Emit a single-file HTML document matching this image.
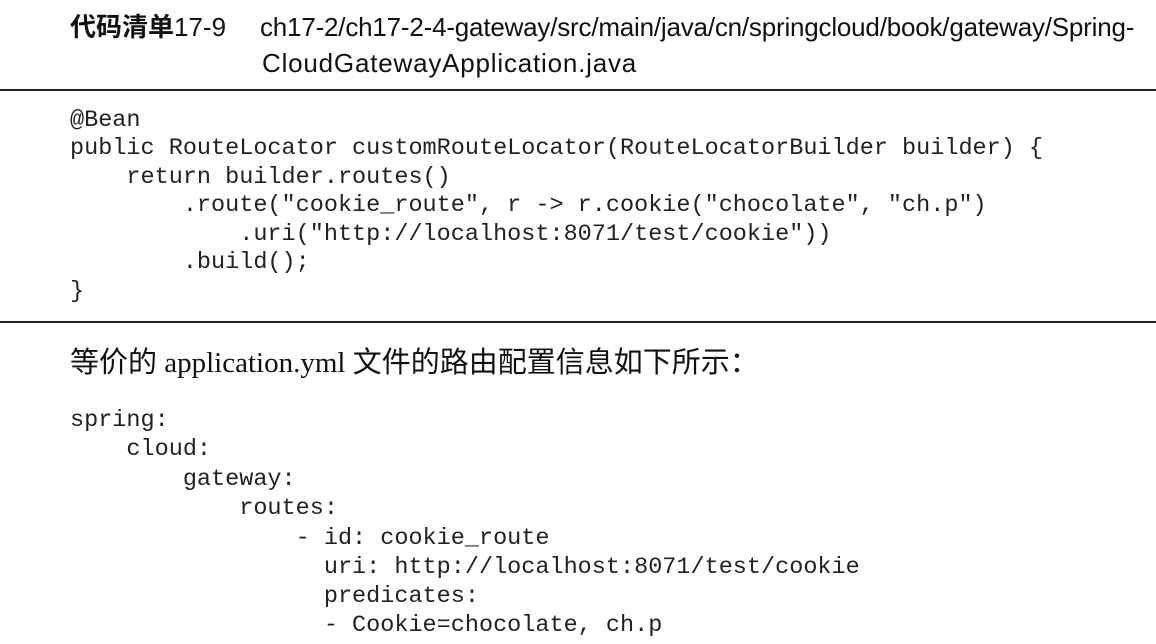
<!DOCTYPE html>
<html><head><meta charset="utf-8"><style>
html,body{margin:0;padding:0;background:#fff;width:1156px;height:644px;overflow:hidden;position:relative;color:#111}
.t{position:absolute;white-space:pre;font-family:"Liberation Sans","Noto Sans CJK SC",sans-serif;font-size:26px;line-height:30px}
.c{position:absolute;white-space:pre;font-family:"Liberation Mono",monospace;font-size:23.5px;line-height:28px;color:#222}
.r{position:absolute;left:0;width:1156px;height:2px;background:#222}
.p{position:absolute;white-space:pre;font-family:"Liberation Serif","Noto Sans CJK SC",sans-serif;font-size:29px;line-height:34px}
</style></head><body>
<div class="t" style="left:70px;top:12px"><b>代码清单</b>17-9</div>
<div class="t" style="left:260px;top:12px;letter-spacing:-0.2px">ch17-2/ch17-2-4-gateway/src/main/java/cn/springcloud/book/gateway/Spring-</div>
<div class="t" style="left:262px;top:48px;letter-spacing:0.8px">CloudGatewayApplication.java</div>
<div class="r" style="top:89px"></div>
<div class="c" style="left:70px;top:107px">@Bean</div>
<div class="c" style="left:70px;top:135px">public RouteLocator customRouteLocator(RouteLocatorBuilder builder) {</div>
<div class="c" style="left:70px;top:164px">    return builder.routes()</div>
<div class="c" style="left:70px;top:192px">        .route("cookie_route", r -> r.cookie("chocolate", "ch.p")</div>
<div class="c" style="left:70px;top:221px">            .uri("http://localhost:8071/test/cookie"))</div>
<div class="c" style="left:70px;top:249px">        .build();</div>
<div class="c" style="left:70px;top:278px">}</div>
<div class="r" style="top:321px"></div>
<div class="p" style="left:70px;top:346px">等价的 application.yml 文件的路由配置信息如下所示：</div>
<div class="c" style="left:70px;top:407px">spring:</div>
<div class="c" style="left:70px;top:436px">    cloud:</div>
<div class="c" style="left:70px;top:466px">        gateway:</div>
<div class="c" style="left:70px;top:495px">            routes:</div>
<div class="c" style="left:70px;top:525px">                - id: cookie_route</div>
<div class="c" style="left:70px;top:554px">                  uri: http://localhost:8071/test/cookie</div>
<div class="c" style="left:70px;top:583px">                  predicates:</div>
<div class="c" style="left:70px;top:612px">                  - Cookie=chocolate, ch.p</div>
</body></html>
